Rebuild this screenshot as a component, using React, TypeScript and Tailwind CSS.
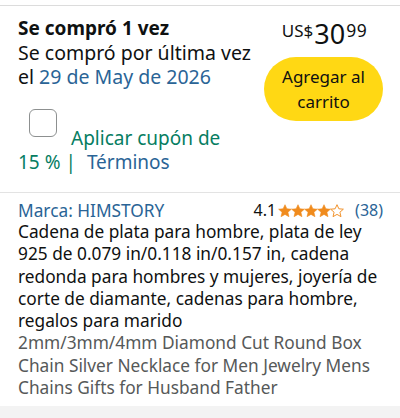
import React from "react";

function Star({ filled }: { filled: boolean }) {
  return (
    <svg width="14" height="14" viewBox="0 0 24 24" className="shrink-0 -mr-[1px]">
      <path
        d="M12 1.2l3.2 7 7.7.7-5.9 5.2 1.8 7.6L12 17.8l-6.8 3.9 1.8-7.6-5.9-5.2 7.7-.7z"
        fill={filled ? "#f08b1d" : "none"}
        stroke="#f08b1d"
        strokeWidth={filled ? 1 : 1.6}
        strokeLinejoin="round"
      />
    </svg>
  );
}

export default function App() {
  return (
    <div
      className="w-[400px] h-[418px] bg-white flex flex-col overflow-hidden text-[#0f1111]"
      style={{ fontFamily: "'Noto Sans', 'Open Sans', sans-serif" }}
    >
      <div className="mt-[5px] border-t border-[#dcdcdc]" />
      <div className="flex pl-[18px] pr-[17px] pt-[9px] h-[186px]">
        <div className="flex-1">
          <p className="text-[19px] leading-[26px] font-bold">Se compró 1 vez</p>
          <p className="text-[19.5px] leading-[24px]">Se compró por última vez</p>
          <p className="text-[19.5px] leading-[24px]">
            el <span className="text-[#2a6496]">29 de May de 2026</span>
          </p>
          <div className="mt-[20px] flex items-end text-[19px] leading-[24px] text-[#067d62]">
            <span className="w-7 h-7 ml-[11px] mr-[14px] mb-[13px] shrink-0 rounded-[6px] border-[1.5px] border-[#8d9090] bg-white" />
            <span>Aplicar cupón de</span>
          </div>
          <p className="text-[19px] leading-[24px] text-[#067d62]">
            15 % |<span className="ml-[11px] text-[#2a6496]">Términos</span>
          </p>
        </div>
        <div className="w-[119px] flex flex-col items-center">
          <div className="flex items-start mt-[8px] h-[27px] ml-[2px]">
            <span className="text-[17px] leading-none mt-[-1px]">US$</span>
            <span className="text-[27px] leading-none mt-[-3px] ml-[1px]">30</span>
            <span className="text-[17.5px] leading-none mt-[-1px] ml-[1px] tracking-[0.5px]">99</span>
          </div>
          <button className="mt-[7px] w-[119px] h-[64px] rounded-full bg-[#ffd814] text-[17px] leading-[25px] text-[#0f1111]">
            Agregar al
            <br />
            carrito
          </button>
        </div>
      </div>
      <div className="border-t border-[#e3e3e3]" />
      <div className="pl-[18px] pr-[17px] pt-[7px]">
        <div className="flex items-baseline justify-between leading-[21px]">
          <span className="text-[17.3px] text-[#2a6496]">Marca: HIMSTORY</span>
          <span className="flex items-center text-[16px] self-center">
            <span className="mr-[2px]">4.1</span>
            <Star filled />
            <Star filled />
            <Star filled />
            <Star filled />
            <Star filled={false} />
            <span className="ml-[12px] text-[#2a6496]">(38)</span>
          </span>
        </div>
        <p className="text-[17.3px] leading-[22.3px]">
          Cadena de plata para hombre, plata de ley 925 de 0.079 in/0.118 in/0.157 in, cadena
          redonda para hombres y mujeres, joyería de corte de diamante, cadenas para hombre,
          regalos para marido
        </p>
        <p className="text-[17.3px] leading-[22.3px] text-[#565959]">
          2mm/3mm/4mm Diamond Cut Round Box Chain Silver Necklace for Men Jewelry Mens Chains
          Gifts for Husband Father
        </p>
      </div>
      <div className="mt-auto h-[12px] bg-[#f3f3f3]" />
    </div>
  );
}
